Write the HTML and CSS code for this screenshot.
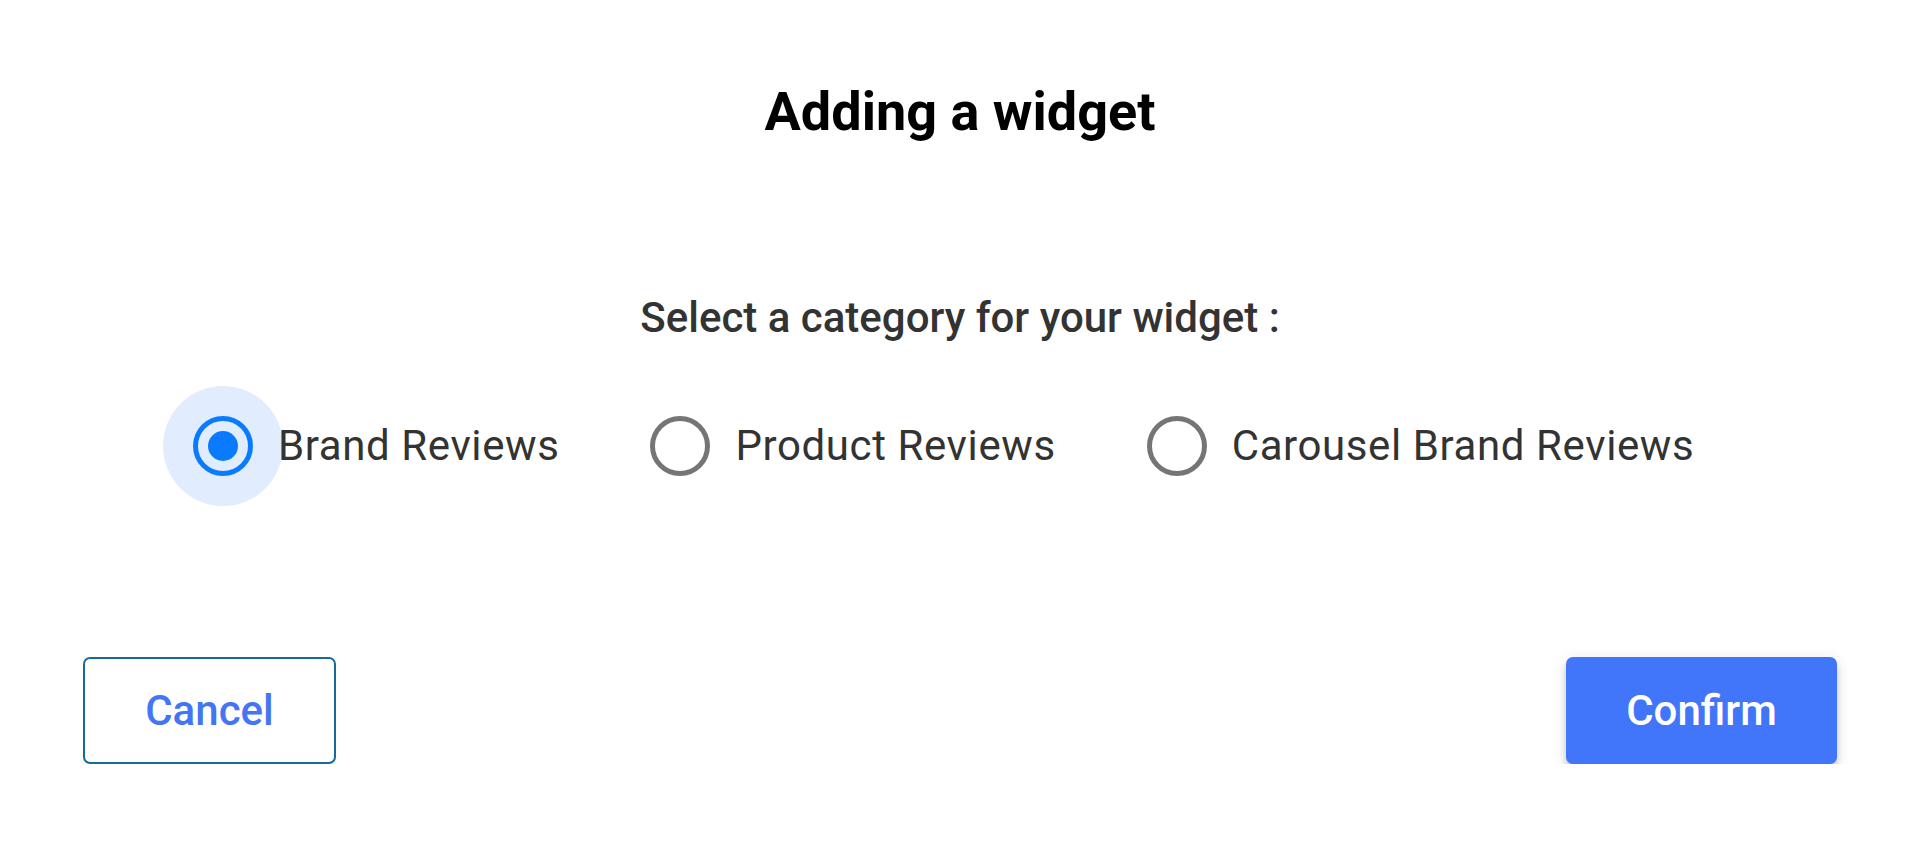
FILE: index.html
```html
<!DOCTYPE html>
<html lang="en">
<head>
    <meta charset="UTF-8">
    <meta name="viewport" content="width=device-width, initial-scale=1">
    <title>Adding a widget</title>
    <link rel="stylesheet" href="styles.css">
</head>
<body>

<div class="dialog">
    <h2 class="title">Adding a widget</h2>

    <p class="subtitle">Select a category for your widget :</p>

    <div class="options">
        <label class="option checked">
            <input type="radio" name="category" value="brand" checked>
            <span class="radio"><span class="ring"></span></span>
            <span class="label">Brand Reviews</span>
        </label>
        <label class="option">
            <input type="radio" name="category" value="product">
            <span class="radio"><span class="ring"></span></span>
            <span class="label">Product Reviews</span>
        </label>
        <label class="option">
            <input type="radio" name="category" value="carousel">
            <span class="radio"><span class="ring"></span></span>
            <span class="label">Carousel Brand Reviews</span>
        </label>
    </div>

    <div class="actions">
        <button class="btn btn-cancel">Cancel</button>
        <button class="btn btn-confirm">Confirm</button>
    </div>
</div>

</body>
</html>
```

FILE: styles.css
```css
body {
    font-family: Roboto, "Liberation Sans", sans-serif;
    background-color: #fff;
    margin: 0;
    color: #333;
}

.dialog {
    display: flex;
    flex-direction: column;
    padding: 79px 70px 0 83px;
}

.title {
    margin: 0;
    font-size: 54px;
    font-weight: 700;
    line-height: 1.2;
    color: #000;
    text-align: center;
    padding-top: 1px;
}

.subtitle {
    margin: 148px 0 0;
    font-size: 42px;
    font-weight: 500;
    line-height: 1.2;
    color: #333;
    text-align: center;
}

.options {
    display: flex;
    align-items: center;
    gap: 61px;
    margin-top: 43px;
    padding-left: 80px;
}

.option {
    display: flex;
    align-items: center;
    cursor: pointer;
}

.option input {
    display: none;
}

.radio {
    width: 120px;
    height: 120px;
    border-radius: 50%;
    display: flex;
    align-items: center;
    justify-content: center;
}

.ring {
    width: 50px;
    height: 50px;
    border: 5px solid #757575;
    border-radius: 50%;
    display: flex;
    align-items: center;
    justify-content: center;
}

.option.checked .radio {
    background-color: #e1edfe;
}

.option.checked .ring {
    border-color: #0a7bff;
}

.option.checked .ring::after {
    content: "";
    width: 30px;
    height: 30px;
    border-radius: 50%;
    background-color: #0a7bff;
}

.label {
    margin-left: -5px;
    font-size: 42px;
    font-weight: 400;
    letter-spacing: 0.6px;
    line-height: 1.2;
    color: #333;
}

.actions {
    display: flex;
    justify-content: space-between;
    margin-top: 151px;
}

.btn {
    font-family: Roboto, "Liberation Sans", sans-serif;
    font-size: 42px;
    font-weight: 500;
    height: 107px;
    border-radius: 7px;
    cursor: pointer;
}

.btn-cancel {
    width: 253px;
    background-color: #fff;
    color: #4475f5;
    border: 2.5px solid #186a9e;
}

.btn-confirm {
    width: 271px;
    background-color: #4175fa;
    color: #fff;
    border: none;
    box-shadow: 0 9px 3px -6px rgba(0, 0, 0, 0.25), 0 6px 6px rgba(0, 0, 0, 0.16), 0 3px 15px rgba(0, 0, 0, 0.12);
}
```
